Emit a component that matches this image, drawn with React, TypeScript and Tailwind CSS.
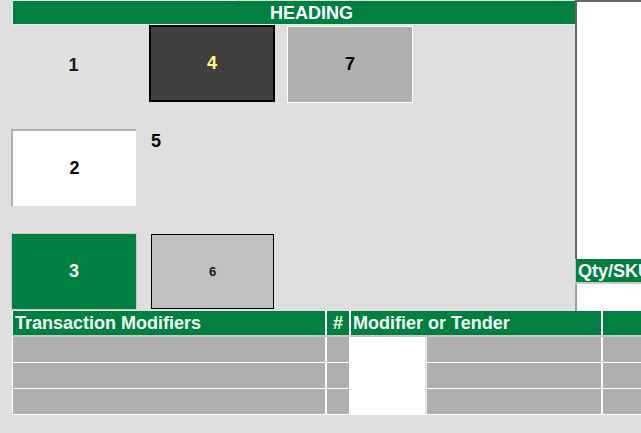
import React from "react";

const G = "bg-[#008040]";

function Row() {
  return (
    <div className="flex h-[26px] border-b border-white">
      <div className="w-[314px] bg-[#afafaf] border-r-2 border-white" />
      <div className="w-[24px] bg-[#afafaf] border-r-2 border-white" />
      <div className="w-[252px] flex border-r-2 border-white">
        <div className="w-[74px] bg-white" />
        <div className="flex-1 bg-[#afafaf] border-l-2 border-[#e8e8e8]" />
      </div>
      <div className="flex-1 bg-[#afafaf]" />
    </div>
  );
}

export default function App() {
  return (
    <div
      className="w-[641px] h-[433px] bg-[#dfdfdf] overflow-hidden"
      style={{ fontFamily: '"Liberation Sans", Arial, sans-serif' }}
    >
      <div className="flex h-[311px]">
        <div className="w-[575px] shrink-0 flex flex-col">
          <div className="h-[1px] ml-[12px] w-[225px] bg-[#f4f4f4]" />
          <div
            className={`ml-[12px] h-[24px] ${G} border-l border-b border-[#e0f0e6] flex items-center justify-center pl-[35px] text-white font-bold text-[18px] leading-none`}
          >
            HEADING
          </div>
          <div className="flex items-start h-[104px]">
            <div className="ml-[12px] mt-[2px] w-[123px] h-[76px] flex items-center justify-center font-bold text-[18px] text-[#101828]">
              1
            </div>
            <div className="ml-[14px] w-[126px] h-[77px] bg-[#404040] border-2 border-black flex items-center justify-center font-bold text-[18px] text-[#ffff80]">
              4
            </div>
            <div className="ml-[12px] mt-[1px] w-[126px] h-[77px] bg-[#afafaf] border border-white flex items-center justify-center font-bold text-[18px] text-black">
              7
            </div>
          </div>
          <div className="flex items-start h-[104px]">
            <div className="ml-[11px] w-[125px] h-[77px] bg-white border-t-2 border-l-2 border-[#b0b0b0] flex items-center justify-center font-bold text-[18px] text-black">
              2
            </div>
            <div className="ml-[15px] mt-[3px] font-bold text-[18px] text-black leading-none">5</div>
          </div>
          <div className="flex items-start">
            <div className="ml-[11px] w-[126px] h-[77px] bg-[#008040] border border-[#c8c8c8] flex items-center justify-center font-bold text-[18px] text-white">
              3
            </div>
            <div className="ml-[14px] mt-[1px] w-[123px] h-[75px] bg-[#c0c0c0] border border-black flex items-center justify-center font-bold text-[13px] text-[#101828]">
              6
            </div>
          </div>
        </div>
        <div className="flex-1 min-w-0 flex flex-col">
          <div className="h-[259px] bg-white border-l-2 border-t-2 border-[#666]" />
          <div className={`h-[25px] ${G} border-l border-b-2 border-[#c8c8c8] flex items-center pl-[2px] text-white font-bold text-[18px] leading-none whitespace-nowrap overflow-hidden`}>
            Qty/SKU
          </div>
          <div className="flex-1 bg-white border-l-2 border-[#a0a0a0]" />
        </div>
      </div>
      <div className="ml-[12px] border-l border-white">
        <div className={`flex h-[26px] ${G} border-b-2 border-[#c8c8c8] text-[18px] font-bold text-[#f0fff4] leading-none`}>
          <div className="w-[314px] border-r-2 border-white flex items-center pl-[2px]">Transaction Modifiers</div>
          <div className="w-[24px] border-r-2 border-white flex items-center justify-center">#</div>
          <div className="w-[252px] border-r-2 border-white flex items-center pl-[2px]">Modifier or Tender</div>
          <div className="flex-1" />
        </div>
        <Row />
        <Row />
        <Row />
      </div>
    </div>
  );
}
